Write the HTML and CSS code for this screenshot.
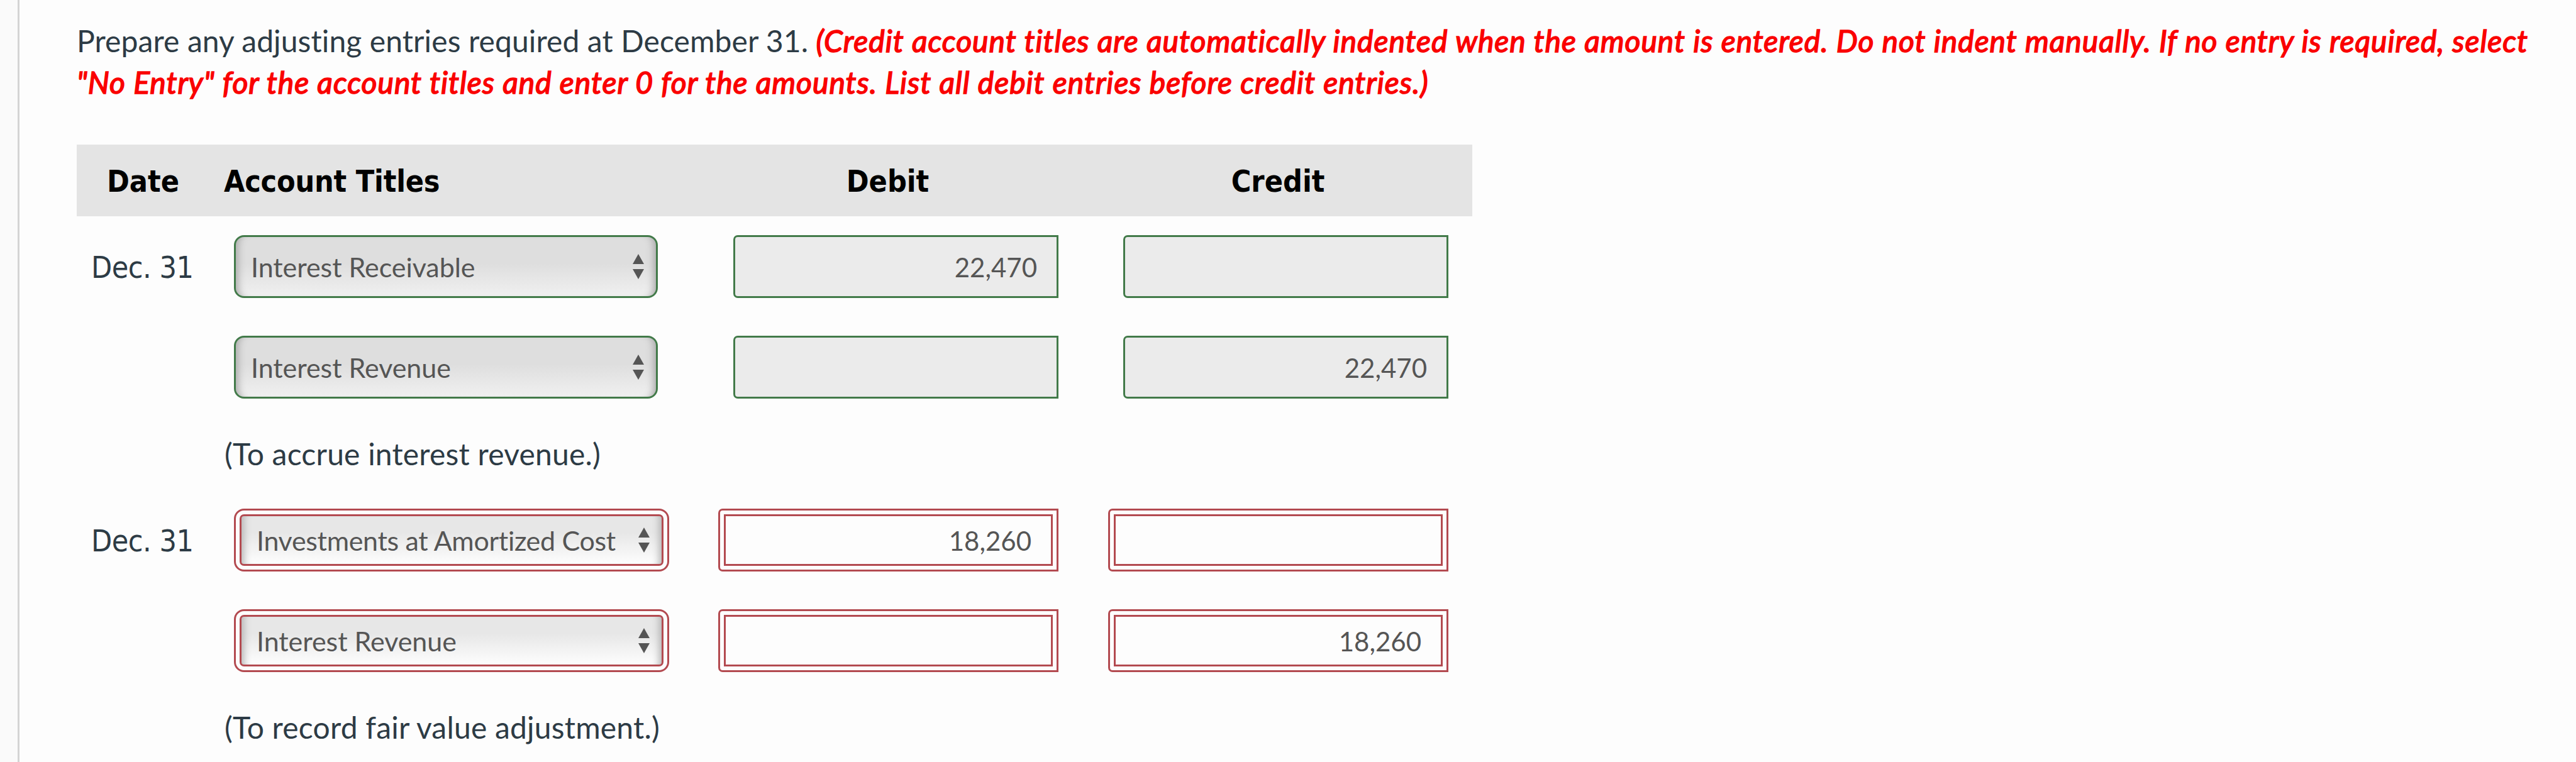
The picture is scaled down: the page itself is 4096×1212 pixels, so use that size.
FILE: index.html
```html
<!DOCTYPE html>
<html lang="en">
<head>
<meta charset="utf-8">
<title>Adjusting entries</title>
<link rel="stylesheet" href="styles.css">
</head>
<body>
<main class="panel">
  <p class="prompt">Prepare any adjusting entries required at December 31. <em class="hint">(Credit account titles are automatically indented when the amount is entered. Do not indent manually. If no entry is required, select<br>"No Entry" for the account titles and enter 0 for the amounts. List all debit entries before credit entries.)</em></p>
  <div class="journal">
    <div class="row head">
      <div class="date">Date</div><div class="title">Account Titles</div><div class="amount">Debit</div><div class="amount">Credit</div>
    </div>
    <div class="row">
      <div class="date">Dec. 31</div>
      <div class="title"><div class="select ok"><span>Interest Receivable</span><svg class="arrows" viewBox="0 0 18 40"><path d="M0 16L9 0L18 16ZM0 24H18L9 40Z"/></svg></div></div>
      <div class="amount"><div class="field ok">22,470</div></div>
      <div class="amount"><div class="field ok"></div></div>
    </div>
    <div class="row">
      <div class="date"></div>
      <div class="title"><div class="select ok"><span>Interest Revenue</span><svg class="arrows" viewBox="0 0 18 40"><path d="M0 16L9 0L18 16ZM0 24H18L9 40Z"/></svg></div></div>
      <div class="amount"><div class="field ok"></div></div>
      <div class="amount"><div class="field ok">22,470</div></div>
    </div>
    <div class="row note"><div class="date"></div><div class="memo">(To accrue interest revenue.)</div></div>
    <div class="row">
      <div class="date">Dec. 31</div>
      <div class="title"><div class="select bad"><div class="inner"><span class="long">Investments at Amortized Cost</span><svg class="arrows" viewBox="0 0 18 40"><path d="M0 16L9 0L18 16ZM0 24H18L9 40Z"/></svg></div></div></div>
      <div class="amount"><div class="field bad"><div class="inner">18,260</div></div></div>
      <div class="amount"><div class="field bad"><div class="inner"></div></div></div>
    </div>
    <div class="row">
      <div class="date"></div>
      <div class="title"><div class="select bad"><div class="inner"><span>Interest Revenue</span><svg class="arrows" viewBox="0 0 18 40"><path d="M0 16L9 0L18 16ZM0 24H18L9 40Z"/></svg></div></div></div>
      <div class="amount"><div class="field bad"><div class="inner"></div></div></div>
      <div class="amount"><div class="field bad"><div class="inner">18,260</div></div></div>
    </div>
    <div class="row note"><div class="date"></div><div class="memo">(To record fair value adjustment.)</div></div>
  </div>
</main>
</body>
</html>
```
FILE: styles.css
```css
* { box-sizing: border-box; }
body { margin: 0; background: #fafafa; font-family: Lato, "Liberation Sans", sans-serif; font-variant-ligatures: none; color: #2d3b45; overflow: hidden; }
.panel { margin-left: 28px; height: 1212px; padding: 32px 0 0 91px; border-left: 3px solid #d4d4d4; background: #fdfdfd; font-size: 48px; }
.prompt { margin: 0; width: 3960px; line-height: 66px; white-space: nowrap; letter-spacing: 0.1px; }
.hint { color: #fa0000; font-style: italic; letter-spacing: 1px; -webkit-text-stroke: 1.6px #fa0000; }
.journal { width: 2219px; margin-top: 66px; }
.row { display: grid; grid-template-columns: 212px 806px 581px 620px; align-items: center; height: 160px; }
.row.head { height: 114px; padding-top: 2px; background: #e4e4e4; color: #000; font-family: "DejaVu Sans Condensed", "DejaVu Sans", sans-serif; font-stretch: condensed; font-weight: 700; }
.head .date { padding-left: 48px; }
.head .title { padding-left: 22px; letter-spacing: -0.2px; }
.amount { padding-right: 38px; }
.amount:last-child { padding-left: 40px; }
.head .amount { text-align: center; }
.row .date { font-family: "DejaVu Sans Condensed", "DejaVu Sans", sans-serif; font-stretch: condensed; letter-spacing: -0.5px; }
.row.head .date { letter-spacing: 0; }
.row:not(.head) .date { padding: 2px 0 0 23px; }
.row:not(.head) .title { padding-left: 38px; }
.row.note { height: 115px; grid-template-columns: 235px 1fr; letter-spacing: 0.2px; }
.select { display: flex; align-items: center; height: 100px; color: #555; font-size: 43px; border-radius: 16px; }
.select span { flex: 1; letter-spacing: -0.05px; }
.select .long { letter-spacing: -0.32px; }
.select.ok { width: 674px; padding: 0 19px 0 24px; border: 3px solid #427a49; background: linear-gradient(#dedede 45%, #f0f0f0); box-shadow: inset 14px 0 12px -10px #aaa, inset -14px 0 12px -10px #aaa; }
.select.bad { width: 692px; padding: 6px; border: 3px solid #b34a50; background: #fdfdfd; }
.select .inner { display: flex; flex: 1; align-items: center; height: 82px; padding: 0 19px 0 24px; border: 3px solid #b34a50; border-radius: 7px; background: linear-gradient(#e7e7e7 35%, #fdfdfd); box-shadow: inset 14px 0 12px -10px #b5b5b5, inset -14px 0 12px -10px #b5b5b5; }
.arrows { width: 18px; height: 40px; fill: #555; }
.field { display: flex; align-items: center; justify-content: flex-end; height: 100px; margin-left: auto; color: #555; font-size: 42px; }
.field.ok { width: 517px; padding: 2px 31px 0 0; border: 3px solid #427a49; border-radius: 7px 0 0 7px; background: #ebebeb; }
.field.bad { width: 541px; padding: 6px; border: 3px solid #b34a50; border-radius: 7px 0 0 7px; }
.field .inner { display: flex; flex: 1; align-items: center; justify-content: flex-end; height: 82px; padding: 2px 31px 0 0; border: 3px solid #b34a50; }
```
